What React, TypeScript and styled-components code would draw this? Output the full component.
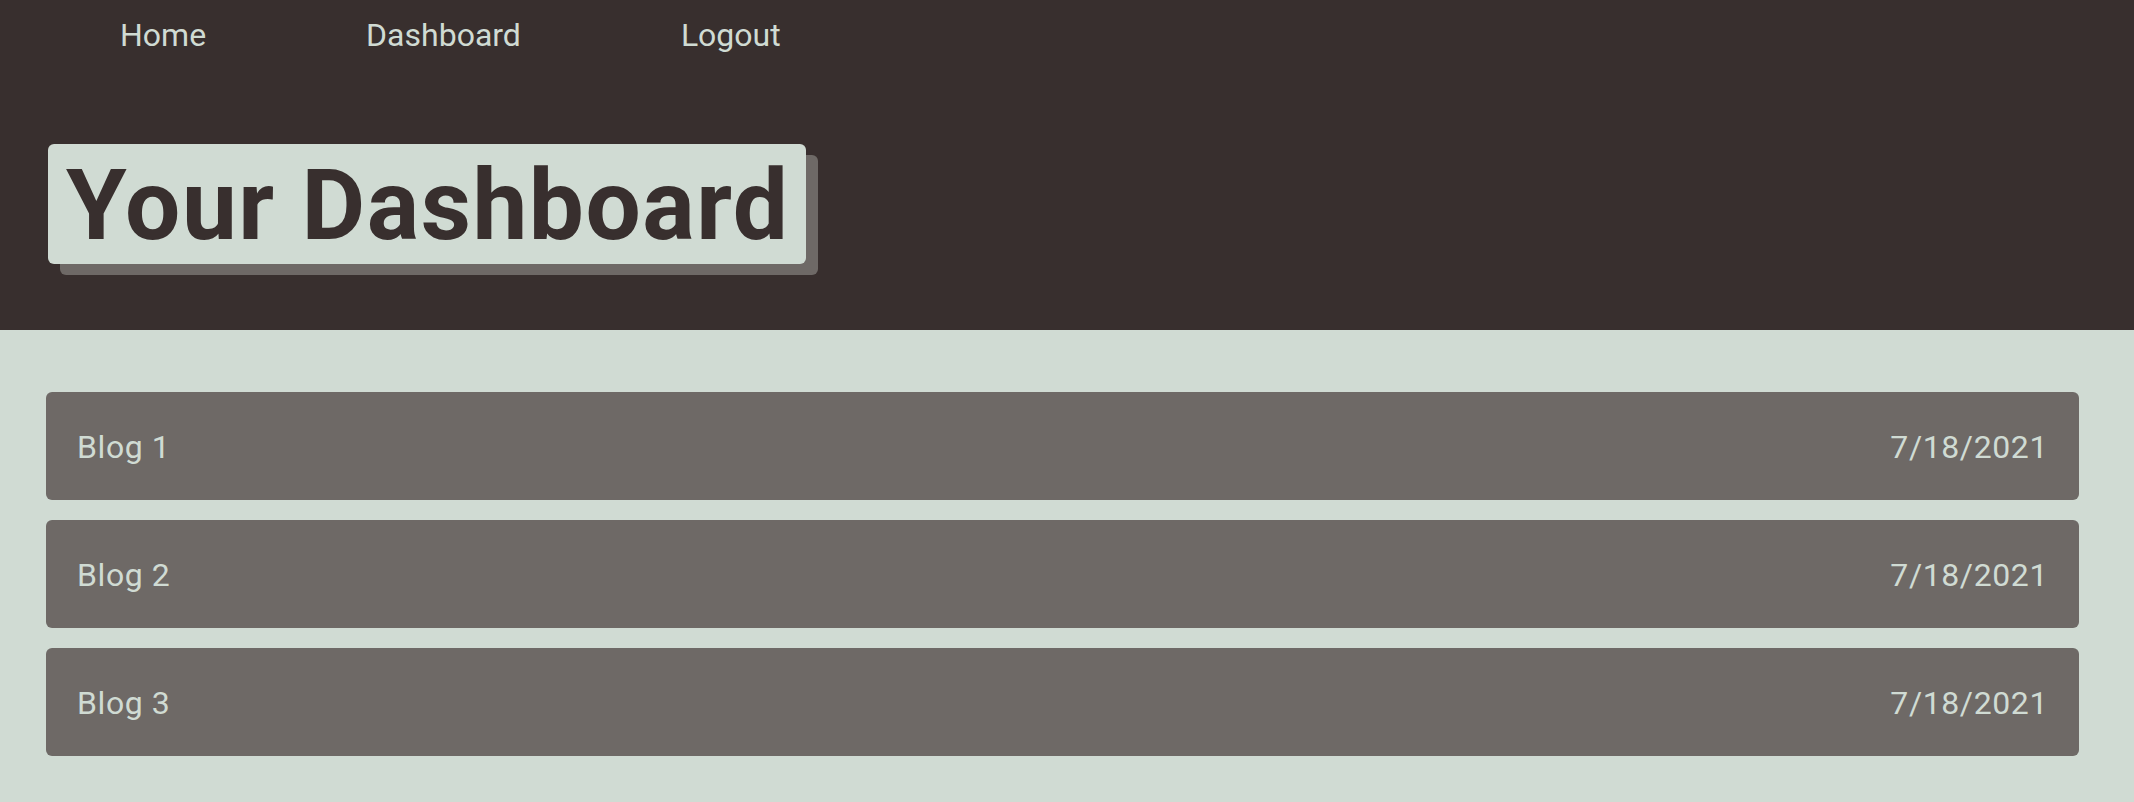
import React from "react";
import styled, { createGlobalStyle } from "styled-components";

const GlobalStyle = createGlobalStyle`
  html, body {
    margin: 0;
    padding: 0;
    background: #d0dbd3;
    font-family: Roboto, "Noto Sans", "Liberation Sans", sans-serif;
  }
  * { box-sizing: border-box; }
`;

const Header = styled.header`
  background: #382f2e;
  height: 330px;
  display: flex;
  flex-direction: column;
  align-items: flex-start;
`;

const Nav = styled.nav`
  height: 70px;
  display: flex;
  align-items: center;
  padding-left: 40px;
`;

const NavLink = styled.a`
  color: #d0dbd3;
  font-size: 32px;
  line-height: 1;
  margin: 0 80px;
  text-decoration: none;
  cursor: pointer;
`;

const TitleBox = styled.h1`
  margin: 74px 0 0 48px;
  padding: 13px 17px 9px 18px;
  background: #d0dbd3;
  color: #382f2e;
  font-size: 98px;
  font-weight: 700;
  letter-spacing: 1.5px;
  line-height: 1;
  border-radius: 6px;
  box-shadow: 12px 11px 0 #6e6966;
`;

const Main = styled.main`
  padding: 62px 55px 40px 46px;
  display: flex;
  flex-direction: column;
  gap: 20px;
`;

const Card = styled.div`
  height: 108px;
  background: #6e6966;
  border-radius: 6px;
  padding: 2px 31px 0 31px;
  display: flex;
  align-items: center;
  justify-content: space-between;
  color: #d0dbd3;
  font-size: 32px;
  letter-spacing: 0.6px;
`;

const posts = [
  { title: "Blog 1", date: "7/18/2021" },
  { title: "Blog 2", date: "7/18/2021" },
  { title: "Blog 3", date: "7/18/2021" },
];

export default function App() {
  return (
    <>
      <GlobalStyle />
      <Header>
        <Nav>
          <NavLink>Home</NavLink>
          <NavLink>Dashboard</NavLink>
          <NavLink>Logout</NavLink>
        </Nav>
        <TitleBox>Your Dashboard</TitleBox>
      </Header>
      <Main>
        {posts.map((p) => (
          <Card key={p.title}>
            <span>{p.title}</span>
            <span>{p.date}</span>
          </Card>
        ))}
      </Main>
    </>
  );
}
